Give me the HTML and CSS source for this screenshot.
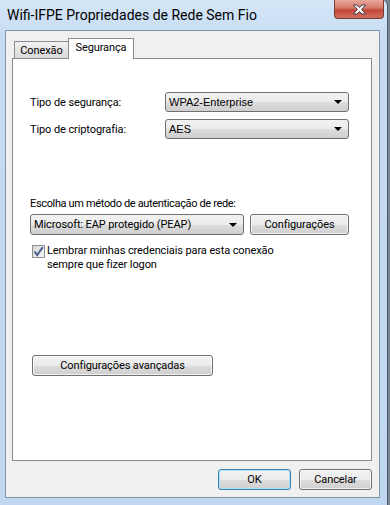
FILE: index.html
```html
<!DOCTYPE html>
<html lang="pt">
  <head>
    <meta charset="UTF-8" />
    <meta name="viewport" content="width=device-width, initial-scale=1.0" />
    <title>Wifi-IFPE Propriedades de Rede Sem Fio</title>
    <link rel="stylesheet" href="styles.css">
  </head>
  <body>
    <div class="window">
      <div class="titlebar">
        <span class="title">Wifi-IFPE Propriedades de Rede Sem Fio</span>
        <button class="close" type="button">
          <svg width="15" height="11" viewBox="0 0 15 11">
            <path d="M1.5 1 H5 L7.5 3.6 L10 1 H13.5 L9.6 5.5 L13.5 10 H10 L7.5 7.4 L5 10 H1.5 L5.4 5.5 Z"
              fill="#fff" stroke="#3d3d4a" stroke-width="1" stroke-linejoin="round" />
          </svg>
        </button>
      </div>

      <div class="client">
        <div class="tabs">
          <div class="tab">Conexão</div>
          <div class="tab active">Segurança</div>
        </div>

        <div class="panel">
          <div class="field-row">
            <label>Tipo de segurança:</label>
            <div class="combo classic">WPA2-Enterprise<span class="arrow"></span></div>
          </div>
          <div class="field-row">
            <label>Tipo de criptografia:</label>
            <div class="combo classic">AES<span class="arrow"></span></div>
          </div>

          <div class="auth-label">Escolha um método de autenticação de rede:</div>
          <div class="auth-row">
            <div class="combo wide">Microsoft: EAP protegido (PEAP)<span class="arrow"></span></div>
            <button class="btn settings" type="button">Configurações</button>
          </div>
          <div class="check">
            <span class="box">
              <svg width="11" height="11" viewBox="0 0 11 11">
                <path d="M1.5 5.5 L4.2 9 L9.8 1.2" fill="none" stroke="#4a5f8c" stroke-width="2" />
              </svg>
            </span>
            <span class="check-text">Lembrar minhas credenciais para esta conexão<br>sempre que fizer logon</span>
          </div>

          <button class="btn advanced" type="button">Configurações avançadas</button>
        </div>

        <div class="footer">
          <button class="btn default" type="button">OK</button>
          <button class="btn" type="button">Cancelar</button>
        </div>
      </div>
    </div>
  </body>
</html>
```

FILE: styles.css
```css
body {
  margin: 0;
  width: 390px;
  height: 505px;
  overflow: hidden;
  background-color: #7a8592;
  font-family: Roboto, "Noto Sans", sans-serif;
  font-size: 11px;
  letter-spacing: -0.1px;
  color: #000;
}
.window {
  box-sizing: border-box;
  width: 388px;
  height: 505px;
  padding: 0 7px 0 5px;
  background: linear-gradient(#d5e6f8, #c5dbf3 40px, #c0d7f1);
  border-right: 1px solid #4f5b69;
  border-top-right-radius: 6px;
}
.titlebar {
  display: flex;
  align-items: flex-start;
  height: 30px;
}
.title {
  padding: 7px 0 0 2px;
  font-size: 14px;
  letter-spacing: 0;
  color: #000;
}
.close {
  margin-left: auto;
  margin-right: -4px;
  width: 50px;
  height: 19px;
  padding: 0;
  border: 1px solid #7d3a35;
  border-top: none;
  border-radius: 0 0 4px 4px;
  background: linear-gradient(#e9a99d, #d47866 45%, #c4453a 55%, #d0705f);
  display: flex;
  align-items: center;
  justify-content: center;
}
.client {
  box-sizing: border-box;
  height: 468px;
  padding: 7px 7px 0 6px;
  background: #f0f0f0;
  border: 1px solid #8595a8;
}
.tabs {
  display: flex;
  align-items: flex-end;
  height: 20px;
}
.tab {
  box-sizing: border-box;
  height: 17px;
  width: 54px;
  margin-left: 2px;
  padding-top: 2px;
  text-align: center;
  border: 1px solid #898c95;
  border-right: none;
  border-bottom: none;
  background: linear-gradient(#f3f3f3, #e4e4e4 50%, #d9d9d9);
}
.tab.active {
  position: relative;
  z-index: 1;
  width: 66px;
  height: 21px;
  margin: 0 0 -1px;
  padding-top: 2px;
  background: #fff;
  border-right: 1px solid #898c95;
}
.panel {
  box-sizing: border-box;
  height: 403px;
  padding: 33px 0 0 17px;
  background: #fff;
  border: 1px solid #898c95;
}
.field-row {
  display: flex;
  align-items: center;
  margin-bottom: 7px;
}
.field-row label {
  width: 135px;
}
.combo {
  box-sizing: border-box;
  position: relative;
  display: flex;
  align-items: center;
  width: 184px;
  height: 20px;
  padding-left: 3px;
  border: 1px solid #707070;
  border-radius: 3px;
  background: linear-gradient(#f2f2f2, #ebebeb 50%, #dddddd 51%, #cfcfcf);
}
.combo.classic {
  font-family: "Liberation Sans", Arial, sans-serif;
  font-size: 11px;
  letter-spacing: 0;
}
.arrow {
  margin-left: auto;
  margin-right: 6px;
  width: 0;
  height: 0;
  border-left: 4px solid transparent;
  border-right: 4px solid transparent;
  border-top: 4px solid #000;
}
.auth-label {
  margin-top: 57px;
  line-height: 15px;
  letter-spacing: -0.35px;
}
.auth-row {
  display: flex;
  gap: 6px;
  margin-top: 3px;
}
.combo.wide {
  width: 214px;
  height: 21px;
}
.btn {
  box-sizing: border-box;
  height: 21px;
  padding: 0;
  font-family: Roboto, "Noto Sans", sans-serif;
  font-size: 11px;
  letter-spacing: -0.1px;
  color: #000;
  border: 1px solid #707070;
  border-radius: 3px;
  background: linear-gradient(#f2f2f2, #ebebeb 50%, #dddddd 51%, #cfcfcf);
  box-shadow: inset 0 0 0 1px rgba(255, 255, 255, 0.7);
}
.btn.settings {
  width: 99px;
}
.check {
  display: flex;
  align-items: flex-start;
  gap: 2px;
  margin: 9px 0 0 2px;
  line-height: 14px;
}
.box {
  box-sizing: border-box;
  display: flex;
  align-items: center;
  justify-content: center;
  width: 13px;
  height: 13px;
  margin-top: 1px;
  border: 1px solid #8e8f8f;
  background: linear-gradient(135deg, #d8d8d8, #f8f8f8);
}
.btn.advanced {
  display: block;
  width: 181px;
  margin: 83px 0 0 2px;
}
.footer {
  display: flex;
  justify-content: flex-end;
  gap: 8px;
  margin-top: 8px;
}
.footer .btn {
  width: 73px;
}
.btn.default {
  border-color: #3c7fb1;
  box-shadow: inset 0 0 0 1px #a8e2f8;
}
```
